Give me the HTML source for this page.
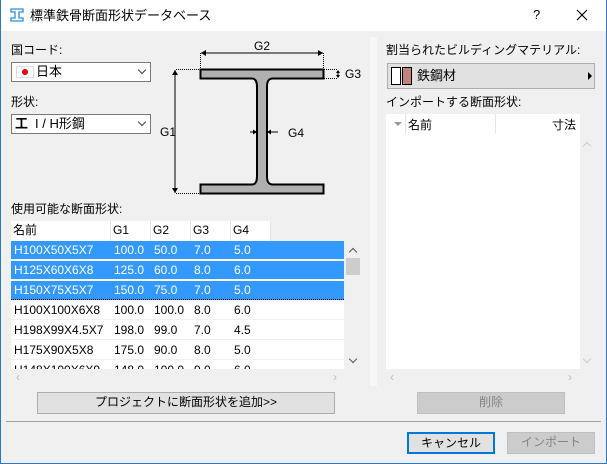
<!DOCTYPE html>
<html><head><meta charset="utf-8"><style>
*{box-sizing:border-box;margin:0;padding:0}
body{width:607px;height:464px;overflow:hidden;background:#f0f0f0;font-family:"Liberation Sans","Noto Sans CJK JP",sans-serif;font-size:12px;color:#000;position:relative}
.a{position:absolute}
.win{left:0;top:0;width:607px;height:464px;border:1px solid #2b78c9;border-top:none}
.title{left:1px;top:0;width:605px;height:31px;background:#fff}
.lbl{position:absolute;white-space:nowrap;line-height:14px}
.combo{position:absolute;background:#fff;border:1px solid #7a7a7a}
.chev{position:absolute;width:6px;height:6px;border-right:1px solid #444;border-bottom:1px solid #444;transform:rotate(45deg)}
.up{position:absolute;width:6px;height:6px;border-left:1.5px solid #555;border-top:1.5px solid #555;transform:rotate(45deg)}
.dn{position:absolute;width:6px;height:6px;border-right:1.5px solid #555;border-bottom:1.5px solid #555;transform:rotate(45deg)}
.row{position:absolute;left:11px;width:333px;height:19px;line-height:19px;white-space:nowrap;font-size:12px}
.row span{position:absolute;top:0}
.sel{background:#3399ff;color:#fff}
.btn{position:absolute;border:1px solid #adadad;background:#e1e1e1;text-align:center;line-height:19px;white-space:nowrap}
</style></head><body>
<div class="a title"></div>
<div class="a win"></div>
<svg class="a" style="left:10px;top:8px" width="14" height="14" viewBox="0 0 14 14"><path d="M1 1h12v3h-4v6h4v3H1v-3h4V4H1z" fill="none" stroke="#2b8fd6" stroke-width="1.3"/></svg>
<div class="lbl" style="left:30px;top:8px;font-size:13px;line-height:16px">標準鉄骨断面形状データベース</div>
<div class="lbl" style="left:533px;top:8px;font-size:13px">?</div>
<svg class="a" style="left:576px;top:9px" width="12" height="12"><path d="M1 1L11 11M11 1L1 11" stroke="#000" stroke-width="1.2"/></svg>

<div class="a" style="left:370px;top:37px;width:7px;height:349px;background:#f7f7f7"></div>

<div class="lbl" style="left:11px;top:43px">国コード:</div>
<div class="combo" style="left:11px;top:62px;width:140px;height:20px">
<div class="a" style="left:4px;top:3px;width:18px;height:12px;background:#fff;border:1px solid #ddd"><div class="a" style="left:5px;top:2px;width:6px;height:6px;border-radius:50%;background:#e00"></div></div>
<div class="lbl" style="left:24px;top:2px;font-size:13px">日本</div>
<div class="chev" style="left:127px;top:4px"></div></div>

<div class="lbl" style="left:11px;top:95px">形状:</div>
<div class="combo" style="left:11px;top:114px;width:140px;height:20px">
<div class="lbl" style="left:3px;top:2px;font-weight:bold;font-size:13px">工</div>
<div class="lbl" style="left:23px;top:2px;font-size:13px">I / H形鋼</div>
<div class="chev" style="left:127px;top:4px"></div></div>

<svg class="a" style="left:150px;top:30px" width="220" height="175" viewBox="0 0 220 175" font-family="Liberation Sans" font-size="12">
<path d="M50.5 39.5H173.5V48.5H123C118 48.5 117 52 117 57V146C117 151 118 154.5 123 154.5H173.5V163.5H50.5V154.5H102C106 154.5 107 151 107 146V57C107 52 106 48.5 102 48.5H50.5Z" fill="#b0b0b0" stroke="#000" stroke-width="2"/>
<path d="M51 23H173" stroke="#000"/><path d="M51 23l5-3v6zM173 23l-5-3v6z" fill="#000"/>
<path d="M50.5 23V39M173.5 23V39M26 39.5H50M26 163.5H50M174 39.5H188M174 48.5H188" stroke="#000" stroke-dasharray="1 1"/>
<path d="M25 40V163" stroke="#000"/><path d="M25 40l-3 5h6zM25 163l-3-5h6z" fill="#000"/>
<path d="M188 41V47" stroke="#000"/><path d="M188 40l-2 3h4zM188 48l-2-3h4z" fill="#000"/>
<path d="M100 102H106M118 102H128" stroke="#000"/><path d="M107 102l-4-2.5v5zM117 102l4-2.5v5z" fill="#000"/>
<text x="104" y="20">G2</text><text x="195" y="48">G3</text><text x="10" y="106">G1</text><text x="138" y="107">G4</text>
</svg>

<div class="lbl" style="left:11px;top:202px">使用可能な断面形状:</div>
<div class="a" style="left:11px;top:221px;width:260px;height:20px;background:#fff"></div>
<div class="a" style="left:110px;top:221px;width:1px;height:20px;background:#e5e5e5"></div>
<div class="a" style="left:150px;top:221px;width:1px;height:20px;background:#e5e5e5"></div>
<div class="a" style="left:190px;top:221px;width:1px;height:20px;background:#e5e5e5"></div>
<div class="a" style="left:230px;top:221px;width:1px;height:20px;background:#e5e5e5"></div>
<div class="a" style="left:270px;top:221px;width:1px;height:20px;background:#e5e5e5"></div>
<div class="row" style="top:221px"><span style="left:2px">名前</span><span style="left:102px">G1</span><span style="left:142px">G2</span><span style="left:182px">G3</span><span style="left:222px">G4</span></div>
<div class="a" style="left:11px;top:241px;width:333px;height:128px;background:#fff;overflow:hidden">
<div class="row sel" style="left:0;top:0;border-bottom:1px solid #fff"><span style="left:3px">H100X50X5X7</span><span style="left:103px">100.0</span><span style="left:143px">50.0</span><span style="left:183px">7.0</span><span style="left:223px">5.0</span></div>
<div class="row sel" style="left:0;top:20px;border-bottom:1px solid #fff"><span style="left:3px">H125X60X6X8</span><span style="left:103px">125.0</span><span style="left:143px">60.0</span><span style="left:183px">8.0</span><span style="left:223px">6.0</span></div>
<div class="row sel" style="left:0;top:40px;border-bottom:1px dotted #000"><span style="left:3px">H150X75X5X7</span><span style="left:103px">150.0</span><span style="left:143px">75.0</span><span style="left:183px">7.0</span><span style="left:223px">5.0</span></div>
<div class="row" style="left:0;top:60px;border-bottom:1px solid #f0f0f0"><span style="left:3px">H100X100X6X8</span><span style="left:103px">100.0</span><span style="left:143px">100.0</span><span style="left:183px">8.0</span><span style="left:223px">6.0</span></div>
<div class="row" style="left:0;top:80px;border-bottom:1px solid #f0f0f0"><span style="left:3px">H198X99X4.5X7</span><span style="left:103px">198.0</span><span style="left:143px">99.0</span><span style="left:183px">7.0</span><span style="left:223px">4.5</span></div>
<div class="row" style="left:0;top:100px;border-bottom:1px solid #f0f0f0"><span style="left:3px">H175X90X5X8</span><span style="left:103px">175.0</span><span style="left:143px">90.0</span><span style="left:183px">8.0</span><span style="left:223px">5.0</span></div>
<div class="row" style="left:0;top:120px"><span style="left:3px">H148X100X6X9</span><span style="left:103px">148.0</span><span style="left:143px">100.0</span><span style="left:183px">9.0</span><span style="left:223px">6.0</span></div>
</div>
<div class="a" style="left:346px;top:258px;width:14px;height:17px;background:#cdcdcd"></div>
<div class="up" style="left:350px;top:249px"></div>
<div class="dn" style="left:350px;top:356px"></div>
<div class="lbl" style="left:16px;top:370px;color:#bbb">‹</div>
<div class="lbl" style="left:333px;top:370px;color:#bbb">›</div>
<div class="btn" style="left:37px;top:392px;width:298px;height:22px">プロジェクトに断面形状を追加&gt;&gt;</div>

<div class="lbl" style="left:386px;top:43px">割当られたビルディングマテリアル:</div>
<div class="a" style="left:387px;top:63px;width:208px;height:26px;background:#e1e1e1;border:1px solid #adadad">
<div class="a" style="left:3px;top:3px;width:10px;height:18px;background:#fff;border:1px solid #000"></div>
<div class="a" style="left:14px;top:3px;width:10px;height:18px;background:#c0857a;border:1px solid #000"></div>
<div class="lbl" style="left:29px;top:5px;font-size:13px">鉄鋼材</div>
<div class="a" style="left:200px;top:8px;border-left:4px solid #000;border-top:4px solid transparent;border-bottom:4px solid transparent"></div></div>
<div class="lbl" style="left:386px;top:95px">インポートする断面形状:</div>
<div class="a" style="left:386px;top:114px;width:194px;height:255px;background:#fff"></div>
<div class="a" style="left:405px;top:114px;width:1px;height:20px;background:#e5e5e5"></div>
<div class="a" style="left:495px;top:114px;width:1px;height:20px;background:#e5e5e5"></div>
<div class="a" style="left:394px;top:122px;border-top:4px solid #999;border-left:4px solid transparent;border-right:4px solid transparent"></div>
<div class="lbl" style="left:408px;top:118px">名前</div>
<div class="lbl" style="left:552px;top:118px">寸法</div>
<div class="up" style="left:584px;top:143px;border-color:#ccc"></div>
<div class="dn" style="left:584px;top:356px;border-color:#ccc"></div>
<div class="lbl" style="left:390px;top:370px;color:#bbb">‹</div>
<div class="lbl" style="left:568px;top:370px;color:#bbb">›</div>
<div class="btn" style="left:417px;top:392px;width:148px;height:22px;background:#cccccc;border-color:#bfbfbf;color:#838383">削除</div>

<div class="a" style="left:6px;top:421px;width:595px;height:1px;background:#a0a0a0"></div>
<div class="btn" style="left:407px;top:432px;width:88px;height:22px;border:2px solid #0078d7;line-height:18px">キャンセル</div>
<div class="btn" style="left:507px;top:432px;width:88px;height:22px;background:#cccccc;border-color:#bfbfbf;color:#838383">インポート</div>
</body></html>
